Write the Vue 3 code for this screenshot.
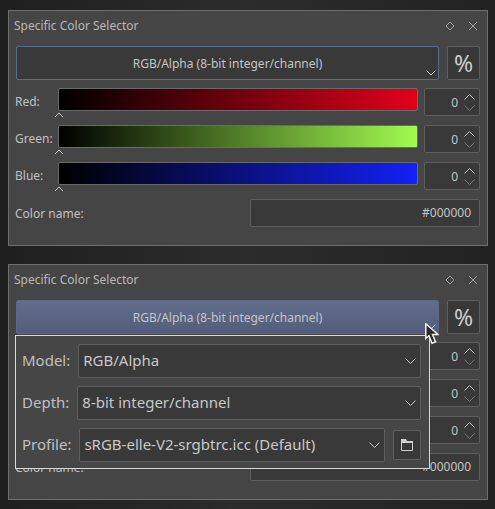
<template>
  <div class="page">
    <section class="panel">
      <header class="panel-head">
        <span>Specific Color Selector</span>
        <div class="head-icons">
          <svg width="10" height="10" viewBox="0 0 10 10"><path d="M5 1 9 5 5 9 1 5Z" fill="none" stroke="#a0a0a0" /></svg>
          <svg width="10" height="10" viewBox="0 0 10 10"><path d="M1 1 9 9M9 1 1 9" fill="none" stroke="#a0a0a0" /></svg>
        </div>
      </header>
      <div class="selector-row">
        <button class="space-btn">
          RGB/Alpha (8-bit integer/channel)
          <svg class="corner" width="10" height="6" viewBox="0 0 10 6"><path d="M.5.5 5 5 9.5.5" fill="none" stroke="#c8c8c8" /></svg>
        </button>
        <button class="percent">%</button>
      </div>
      <div v-for="c in channels" :key="c.name" class="channel">
        <label>{{ c.name }}:</label>
        <div class="slider-wrap">
          <div class="slider" :style="{ background: c.grad }"></div>
          <svg class="thumb" width="10" height="6" viewBox="0 0 10 6"><path d="M1 5 5 1 9 5" fill="none" stroke="#c8c8c8" /></svg>
        </div>
        <div class="spin">
          <span>0</span>
          <div class="arrows">
            <svg width="11" height="6" viewBox="0 0 11 6"><path d="M.5 5.5 5.5.5 10.5 5.5" fill="none" stroke="#c4c4c4" /></svg>
            <svg width="11" height="6" viewBox="0 0 11 6"><path d="M.5.5 5.5 5.5 10.5.5" fill="none" stroke="#777" /></svg>
          </div>
        </div>
      </div>
      <div class="name-row">
        <label>Color name:</label>
        <div class="name-input">#000000</div>
      </div>
    </section>

    <section class="panel second">
      <header class="panel-head">
        <span>Specific Color Selector</span>
        <div class="head-icons">
          <svg width="10" height="10" viewBox="0 0 10 10"><path d="M5 1 9 5 5 9 1 5Z" fill="none" stroke="#a0a0a0" /></svg>
          <svg width="10" height="10" viewBox="0 0 10 10"><path d="M1 1 9 9M9 1 1 9" fill="none" stroke="#a0a0a0" /></svg>
        </div>
      </header>
      <div class="selector-row">
        <button class="space-btn active">
          RGB/Alpha (8-bit integer/channel)
          <svg class="corner" width="10" height="6" viewBox="0 0 10 6"><path d="M.5.5 5 5 9.5.5" fill="none" stroke="#c8c8c8" /></svg>
        </button>
        <button class="percent">%</button>
      </div>
      <!-- labels and sliders sit under the popup here, only the spin boxes show -->
      <div v-for="c in channels" :key="c.name" class="channel">
        <label></label>
        <div class="slider-wrap"></div>
        <div class="spin">
          <span>0</span>
          <div class="arrows">
            <svg width="11" height="6" viewBox="0 0 11 6"><path d="M.5 5.5 5.5.5 10.5 5.5" fill="none" stroke="#c4c4c4" /></svg>
            <svg width="11" height="6" viewBox="0 0 11 6"><path d="M.5.5 5.5 5.5 10.5.5" fill="none" stroke="#777" /></svg>
          </div>
        </div>
      </div>
      <div class="name-row">
        <label>Color name:</label>
        <div class="name-input">#000000</div>
      </div>

      <div class="popup">
        <div class="pop-row">
          <label>Model:</label>
          <div class="combo">
            <span>RGB/Alpha</span>
            <svg width="11" height="6" viewBox="0 0 11 6"><path d="M.5.5 5.5 5.5 10.5.5" fill="none" stroke="#c8c8c8" /></svg>
          </div>
        </div>
        <div class="pop-row">
          <label>Depth:</label>
          <div class="combo">
            <span>8-bit integer/channel</span>
            <svg width="11" height="6" viewBox="0 0 11 6"><path d="M.5.5 5.5 5.5 10.5.5" fill="none" stroke="#c8c8c8" /></svg>
          </div>
        </div>
        <div class="pop-row">
          <label>Profile:</label>
          <div class="combo">
            <span>sRGB-elle-V2-srgbtrc.icc (Default)</span>
            <svg width="11" height="6" viewBox="0 0 11 6"><path d="M.5.5 5.5 5.5 10.5.5" fill="none" stroke="#c8c8c8" /></svg>
          </div>
          <button class="folder">
            <svg width="12" height="12" viewBox="0 0 12 12"><path d="M.5 3.5h11v8H.5z" fill="none" stroke="#d0d0d0" /><path d="M0 0h5l1 2h6v2H0z" fill="#d0d0d0" /></svg>
          </button>
        </div>
      </div>

      <svg class="cursor" width="14" height="22" viewBox="0 0 14 22">
        <path d="M.8.8V15.5L4 12.8 7 20.2 10.5 18.8 7.5 11.5H13Z" fill="#2a2a2a" stroke="#f2f2f2" stroke-width="1.5" />
      </svg>
    </section>
  </div>
</template>

<script setup>
const channels = [
  { name: 'Red', grad: 'linear-gradient(90deg, #000 0%, #e2001a 100%)' },
  { name: 'Green', grad: 'linear-gradient(90deg, #000 0%, #a2fb50 100%)' },
  { name: 'Blue', grad: 'linear-gradient(90deg, #000 0%, #1420f6 100%)' }
]
</script>

<style>
html, body {
  margin: 0;
  background: #262626;
}
</style>

<style scoped>
.page {
  width: 495px;
  height: 509px;
  box-sizing: border-box;
  padding: 10px 7px 0 8px;
  display: flex;
  flex-direction: column;
  gap: 18px;
  background: linear-gradient(90deg, #1f1f1f 0%, #2c2c2c 50%, #222 100%);
  font-family: "Noto Sans", sans-serif;
  font-size: 12px;
  color: #c0c0c0;
  overflow: hidden;
}

.panel {
  position: relative;
  height: 236px;
  box-sizing: border-box;
  background: #454545;
  border: 1px solid #6e6e6e;
  padding: 0 7px;
}

.panel-head {
  height: 35px;
  display: flex;
  align-items: center;
  justify-content: space-between;
  padding: 0 2px 6px 0;
  box-sizing: border-box;
  margin-left: -2px;
  color: #b8b8b8;
}

.head-icons {
  display: flex;
  gap: 13px;
}

.selector-row {
  display: flex;
  gap: 8px;
  height: 34px;
  margin-bottom: 8px;
}

.space-btn {
  position: relative;
  flex: 1;
  padding: 0;
  border: 1px solid #5b6a8e;
  border-radius: 2px;
  background: #393939;
  color: #c4c4c4;
  font: inherit;
}

.space-btn.active {
  border-color: #5d6884;
  background: linear-gradient(180deg, #626d8b 0%, #525d7b 100%);
}

.corner {
  position: absolute;
  right: 2px;
  bottom: 3px;
}

.percent {
  width: 33px;
  padding: 0;
  border: 1px solid #5e5e5e;
  border-radius: 2px;
  background: #383838;
  color: #cecece;
  font: 23px "Noto Sans", sans-serif;
}

.channel {
  display: grid;
  grid-template-columns: 43px 360px 56px;
  height: 28px;
  margin-bottom: 9px;
  margin-left: -1px;
}

.channel label {
  line-height: 28px;
}

.slider-wrap {
  position: relative;
}

.slider {
  height: 23px;
  box-sizing: border-box;
  width: 360px;
  border: 1px solid #6a6a6a;
  border-radius: 2px;
}

.thumb {
  position: absolute;
  left: -4px;
  top: 24px;
}

.spin {
  width: 56px;
  margin-left: 6px;
  height: 28px;
  box-sizing: border-box;
  border: 1px solid #5e5e5e;
  border-radius: 2px;
  background: #393939;
  display: flex;
  align-items: center;
  justify-content: flex-end;
  gap: 6px;
  padding-right: 4px;
  color: #c4c4c4;
}

.arrows {
  display: flex;
  flex-direction: column;
  gap: 5px;
}

.name-row {
  display: flex;
  align-items: center;
  justify-content: space-between;
  height: 28px;
  margin-left: -1px;
}

.name-input {
  width: 230px;
  height: 28px;
  box-sizing: border-box;
  border: 1px solid #5e5e5e;
  border-radius: 2px;
  background: #393939;
  line-height: 26px;
  text-align: right;
  padding-right: 8px;
  color: #c4c4c4;
}

.popup {
  position: absolute;
  left: 6px;
  top: 70px;
  width: 415px;
  height: 134px;
  box-sizing: border-box;
  background: #464646;
  border: 1px solid #d8d8d8;
  padding: 8px 8px 0 6px;
  display: flex;
  flex-direction: column;
  gap: 8px;
  font-size: 15px;
}

.pop-row {
  display: flex;
  align-items: center;
  gap: 8px;
  height: 34px;
}

.pop-row label {
  padding-bottom: 2px;
}

.combo {
  flex: 1;
  height: 34px;
  box-sizing: border-box;
  border: 1px solid #5e5e5e;
  border-radius: 2px;
  background: #393939;
  display: flex;
  align-items: center;
  justify-content: space-between;
  padding: 0 4px;
  color: #c8c8c8;
}

.combo span {
  padding-bottom: 2px;
}

.folder {
  width: 28px;
  height: 30px;
  padding: 0;
  border: 1px solid #5e5e5e;
  border-radius: 2px;
  background: #393939;
  display: flex;
  align-items: center;
  justify-content: center;
}

.cursor {
  position: absolute;
  left: 416px;
  top: 58px;
}
</style>
